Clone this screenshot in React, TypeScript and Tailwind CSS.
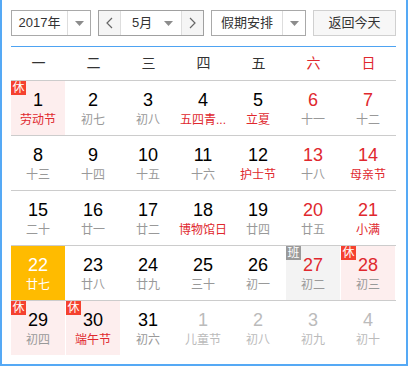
import React from 'react';

// May 2017 calendar panel: toolbar with year / month / holiday pickers, then a 7x5 day grid.

type Day = {
  d: number;
  l: string;
  red?: boolean; // red day number (weekend / holiday)
  lred?: boolean; // red lunar / festival text
  badge?: '休' | '班';
  other?: boolean; // day of next month
  today?: boolean;
};

const weeks: Day[][] = [
  [
    { d: 1, l: '劳动节', lred: true, badge: '休' },
    { d: 2, l: '初七' },
    { d: 3, l: '初八' },
    { d: 4, l: '五四青...', lred: true },
    { d: 5, l: '立夏', lred: true },
    { d: 6, l: '十一', red: true },
    { d: 7, l: '十二', red: true },
  ],
  [
    { d: 8, l: '十三' },
    { d: 9, l: '十四' },
    { d: 10, l: '十五' },
    { d: 11, l: '十六' },
    { d: 12, l: '护士节', lred: true },
    { d: 13, l: '十八', red: true },
    { d: 14, l: '母亲节', red: true, lred: true },
  ],
  [
    { d: 15, l: '二十' },
    { d: 16, l: '廿一' },
    { d: 17, l: '廿二' },
    { d: 18, l: '博物馆日', lred: true },
    { d: 19, l: '廿四' },
    { d: 20, l: '廿五', red: true },
    { d: 21, l: '小满', red: true, lred: true },
  ],
  [
    { d: 22, l: '廿七', today: true },
    { d: 23, l: '廿八' },
    { d: 24, l: '廿九' },
    { d: 25, l: '三十' },
    { d: 26, l: '初一' },
    { d: 27, l: '初二', red: true, badge: '班' },
    { d: 28, l: '初三', red: true, badge: '休' },
  ],
  [
    { d: 29, l: '初四', badge: '休' },
    { d: 30, l: '端午节', lred: true, badge: '休' },
    { d: 31, l: '初六' },
    { d: 1, l: '儿童节', other: true },
    { d: 2, l: '初八', other: true },
    { d: 3, l: '初九', other: true },
    { d: 4, l: '初十', other: true },
  ],
];

const weekdays = ['一', '二', '三', '四', '五', '六', '日'];

function Caret() {
  return (
    <svg width="9" height="5" viewBox="0 0 9 5">
      <path d="M0 0 H9 L4.5 5 Z" fill="#8c8c8c" />
    </svg>
  );
}

function Chevron({ dir }: { dir: 'left' | 'right' }) {
  return (
    <svg width="7" height="12" viewBox="0 0 7 12">
      <polyline
        points={dir === 'left' ? '6,1 1,6 6,11' : '1,1 6,6 1,11'}
        fill="none"
        stroke="#666"
        strokeWidth="1.2"
      />
    </svg>
  );
}

function Cell({ day }: { day: Day }) {
  let bg = '';
  if (day.today) bg = 'bg-[#ffbb00]';
  else if (day.badge === '休') bg = 'bg-[#fdeeee]';
  else if (day.badge === '班') bg = 'bg-[#f3f3f3]';

  let numColor = 'text-black';
  let lunarColor = 'text-[#999]';
  if (day.red) numColor = 'text-[#e0282e]';
  if (day.lred) lunarColor = 'text-[#e0282e]';
  if (day.other) {
    numColor = 'text-[#bbb]';
    lunarColor = 'text-[#bbb]';
  }
  if (day.today) {
    numColor = 'text-white';
    lunarColor = 'text-white';
  }

  return (
    <div className={`relative flex h-[54px] w-[54px] flex-col items-center pt-[9px] ${bg}`}>
      {day.badge && (
        <span
          className={`absolute left-0 top-0 h-[14px] w-[15px] text-center text-[12px] leading-[14px] text-white ${
            day.badge === '休' ? 'bg-[#f5412f]' : 'bg-[#9a9a9a]'
          }`}
        >
          {day.badge}
        </span>
      )}
      <div className={`text-[18px] leading-[20px] ${numColor}`}>{day.d}</div>
      <div className={`whitespace-nowrap text-[12px] leading-[20px] ${lunarColor}`}>{day.l}</div>
    </div>
  );
}

export default function App() {
  return (
    <div
      className="h-[366px] w-[408px] border-x-2 border-b-2 border-[#55a9f5] bg-white pl-[9px] pr-[10px] pt-[10px]"
      style={{ fontFamily: '"Liberation Sans", Arial, "Noto Sans CJK SC", sans-serif' }}
    >
      <div className="flex h-[26px] justify-between text-[13px] text-[#333]">
        <div className="flex w-[80px] border border-[#a9a9a9]">
          <div className="flex flex-1 items-center justify-center">2017年</div>
          <div className="flex w-[23px] items-center justify-center border-l border-[#ddd]">
            <Caret />
          </div>
        </div>

        <div className="flex w-[106px] border border-[#a0a0a0]">
          <div className="flex w-[22px] items-center justify-center border-r border-[#ddd] bg-[#f5f5f5]">
            <Chevron dir="left" />
          </div>
          <div className="flex flex-1 items-center justify-between pl-[11px] pr-[8px]">
            <span>5月</span>
            <Caret />
          </div>
          <div className="flex w-[22px] items-center justify-center border-l border-[#ddd] bg-[#f5f5f5]">
            <Chevron dir="right" />
          </div>
        </div>

        <div className="flex w-[95px] border border-[#a9a9a9]">
          <div className="flex flex-1 items-center justify-center">假期安排</div>
          <div className="flex w-[23px] items-center justify-center border-l border-[#ddd]">
            <Caret />
          </div>
        </div>

        <button className="flex w-[83px] items-center justify-center border border-[#d0d0d0] bg-[#f7f7f7] text-[#333]">
          返回今天
        </button>
      </div>

      <div className="mt-[10px] border-t border-[#4ea3f2]">
        <div className="grid h-[34px] grid-cols-7 border-b border-[#ccc] text-[14px]">
          {weekdays.map((w, i) => (
            <div
              key={w}
              className={`flex items-center justify-center ${i >= 5 ? 'text-[#e0282e]' : 'text-[#333]'}`}
            >
              {w}
            </div>
          ))}
        </div>

        {weeks.map((week, wi) => (
          <div
            key={wi}
            className={`grid grid-cols-7 ${wi < weeks.length - 1 ? 'border-b border-[#ccc]' : ''}`}
          >
            {week.map((day, di) => (
              <Cell key={di} day={day} />
            ))}
          </div>
        ))}
      </div>
    </div>
  );
}
